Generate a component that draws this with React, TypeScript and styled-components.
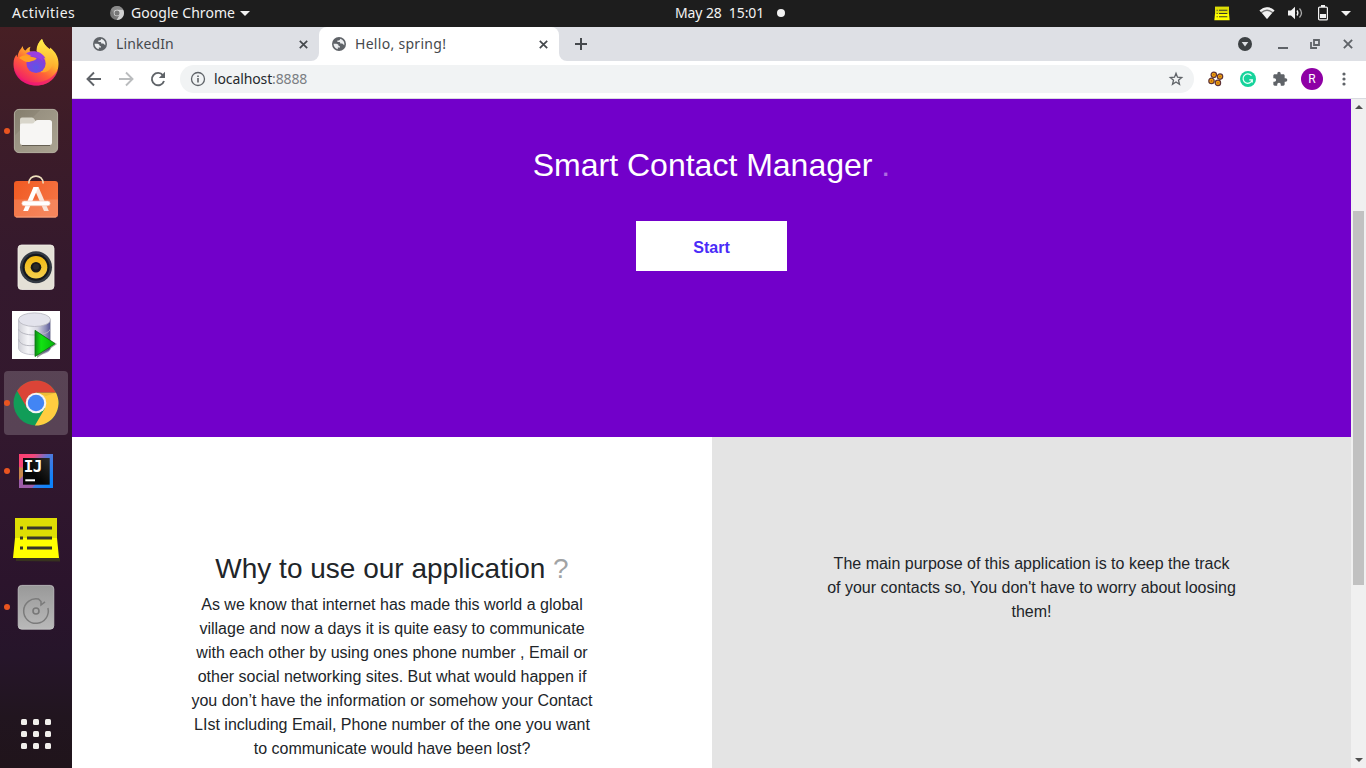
import React from "react";
import styled, { createGlobalStyle } from "styled-components";

const GlobalStyle = createGlobalStyle`
  * { box-sizing: border-box; }
  body { margin: 0; overflow: hidden; }
  svg { display: block; flex: none; }
`;

const Desktop = styled.div`
  width: 1366px;
  height: 768px;
  display: flex;
  flex-direction: column;
  overflow: hidden;
  background: #fff;
  font-family: "Noto Sans", "Open Sans", sans-serif;
`;

const TopBar = styled.header`
  height: 27px;
  flex: none;
  display: grid;
  grid-template-columns: 675px 1fr auto;
  align-items: center;
  background: #1d1d1d;
  color: #f2f2f2;
  padding-right: 15px;
`;

const BarGroup = styled.div<{ $pad?: number }>`
  display: flex;
  align-items: center;
  height: 27px;
  padding-left: ${(p) => p.$pad ?? 0}px;
  padding-bottom: 1px;
`;

const Label = styled.span<{ $w?: number; $track?: number }>`
  font-size: 14px;
  letter-spacing: ${(p) => p.$track ?? 0}px;
  width: ${(p) => (p.$w ? `${p.$w}px` : "auto")};
  line-height: 20px;
  white-space: pre;
  flex: none;
`;

const Gap = styled.span<{ $w: number }>`
  width: ${(p) => p.$w}px;
  flex: none;
`;

const Main = styled.div`
  flex: 1;
  display: flex;
  min-height: 0;
`;

const Dock = styled.nav`
  width: 72px;
  flex: none;
  display: flex;
  flex-direction: column;
  gap: 4px;
  padding: 4px 4px 2px;
  background: linear-gradient(#471f24 0%, #3d1c28 13%, #34192d 33%, #32182e 55%, #2b142c 75%, #26152a 85%, #21151f 93%, #20141b 100%);
`;

const DockItem = styled.div<{ $active?: boolean; $last?: boolean }>`
  width: 64px;
  height: 64px;
  flex: none;
  display: flex;
  align-items: center;
  justify-content: center;
  position: relative;
  border-radius: 4px;
  margin-top: ${(p) => (p.$last ? "auto" : 0)};
  background: ${(p) => (p.$active ? "rgba(255,255,255,.19)" : "transparent")};
`;

const RunningDot = styled.i`
  position: absolute;
  left: 0;
  top: 29px;
  width: 6px;
  height: 6px;
  border-radius: 50%;
  background: #e95420;
`;

const AppGrid = styled.div`
  display: grid;
  grid-template-columns: repeat(3, 6px);
  gap: 6px;
`;

const AppDot = styled.i`
  height: 6px;
  border-radius: 1.5px;
  background: #f1efec;
`;

const Browser = styled.section`
  flex: 1;
  min-width: 0;
  display: flex;
  flex-direction: column;
`;

const TabStrip = styled.div`
  height: 34px;
  flex: none;
  display: flex;
  background: #fff;
  color: #45494d;
`;

const Tab = styled.div<{ $active?: boolean }>`
  width: ${(p) => (p.$active ? 240 : 247)}px;
  padding: 0 11px 0 ${(p) => (p.$active ? 13 : 21)}px;
  display: flex;
  align-items: center;
  gap: 9px;
  background: ${(p) => (p.$active ? "#fff" : "#dee0e5")};
  border-radius: ${(p) => (p.$active ? "8px 8px 0 0" : "0 0 8px 0")};
`;

const TabCorner = styled.div`
  width: 240px;
  display: flex;
  background: linear-gradient(#dee0e5 0 12px, #fff 12px);
`;

const TabLabel = styled(Label)`
  flex: 1;
`;

const StripRest = styled.div`
  flex: 1;
  display: flex;
  align-items: center;
  background: #dee0e5;
  border-radius: 0 0 0 8px;
  padding: 0 13px 0 14px;
`;

const Spacer = styled.span`
  flex: 1;
`;

const Toolbar = styled.div`
  height: 38px;
  flex: none;
  display: flex;
  align-items: center;
  padding: 0 13px 2px;
  background: #fff;
  border-bottom: 1px solid #d9dae0;
`;

const Omnibox = styled.div`
  width: 1014px;
  height: 28px;
  flex: none;
  display: flex;
  align-items: center;
  padding: 0 10px;
  border-radius: 14px;
  background: #f1f3f4;
  color: #25282c;
`;

const Port = styled.span`
  color: #7b7e83;
`;

const Avatar = styled.div`
  width: 22px;
  height: 22px;
  flex: none;
  border-radius: 50%;
  display: flex;
  align-items: center;
  justify-content: center;
  background: #8e00a5;
  color: #fff;
  font: 12px/22px Roboto, sans-serif;
`;

const Viewport = styled.div`
  flex: 1;
  display: flex;
  min-height: 0;
`;

const Page = styled.main`
  flex: 1;
  display: flex;
  flex-direction: column;
  font-family: "Liberation Sans", Arial, sans-serif;
  color: #212529;
  overflow: hidden;
`;

const Hero = styled.section`
  height: 338px;
  flex: none;
  display: flex;
  flex-direction: column;
  align-items: center;
  padding-top: 46px;
  background: #7200ca;
`;

const HeroTitle = styled.h1`
  margin: 0 0 36px;
  font-size: 32px;
  font-weight: 400;
  line-height: 40px;
  color: #fff;
`;

const Faded = styled.span`
  opacity: .42;
`;

const StartButton = styled.button`
  width: 151px;
  height: 50px;
  border: 0;
  padding: 3px 0 0;
  background: #fff;
  color: #4a2cf8;
  font: bold 16px "Liberation Sans", Arial, sans-serif;
`;

const Columns = styled.div`
  flex: 1;
  display: grid;
  grid-template-columns: 640px 639px;
  min-height: 0;
`;

const Column = styled.section<{ $shade?: boolean }>`
  background: ${(p) => (p.$shade ? "#e4e4e4" : "#fff")};
  padding-top: 115px;
  text-align: center;
  overflow: hidden;
`;

const Question = styled.h2`
  margin: 0 0 7px;
  font-size: 28px;
  font-weight: 400;
  line-height: 34px;
`;

const Copy = styled.p`
  margin: 0;
  font-size: 16px;
  line-height: 24px;
`;

const ScrollTrack = styled.div`
  width: 15px;
  flex: none;
  display: flex;
  flex-direction: column;
  align-items: center;
  background: #f0f0f0;
  padding: 6px 0;
  justify-content: space-between;
`;

const ScrollThumb = styled.div`
  width: 11px;
  height: 374px;
  background: #c1c1c1;
  margin-bottom: 72px;
`;

const Firefox = () => (
  <svg width="48" height="48" viewBox="0 0 48 48">
    <defs>
      <linearGradient id="ffBody" x1=".8" y1=".1" x2=".25" y2=".95">
        <stop offset="0" stopColor="#ffe845" />
        <stop offset=".35" stopColor="#ffb02d" />
        <stop offset=".62" stopColor="#ff6038" />
        <stop offset="1" stopColor="#f01a6c" />
      </linearGradient>
      <radialGradient id="ffCore" cx=".5" cy=".7" r=".7">
        <stop offset="0" stopColor="#5b56e8" />
        <stop offset="1" stopColor="#9a35d6" />
      </radialGradient>
      <linearGradient id="ffTail" x1="0" y1="0" x2="0" y2="1">
        <stop offset="0" stopColor="#fff04a" />
        <stop offset="1" stopColor="#ffa22b" />
      </linearGradient>
    </defs>
    <path d="M7.3 12C8 11 9.500 9 10.700 7C11 9.500 12 11 13.500 11.500C15 9.500 16.500 8.500 18.500 7.800C17.500 10 17.600 11.500 18 12.500L25 13C25 8 26.200 3.500 30 0C31.500 4.500 34 7.500 37 9.500C38 10.500 38.300 9.700 38 8.500C44 13 46.700 19 46.500 25C46.200 38 36.500 46.500 24.500 46.500C11.500 46.500 1.500 37 1.500 25C1.500 20 3 17 4.700 15.500C4.700 17 5 17.800 5.500 18C6 15 6.500 13.500 7.300 12Z" fill="url(#ffBody)" />
    <path d="M1.600 28C5 38 13 43.500 23 43.500C34 43.500 42 38 46.200 30C44.500 39 36 46.500 24.500 46.500C12 46.500 2.800 39 1.600 28Z" fill="#ec137c" opacity=".6" />
    <path d="M24.500 12C24.500 7 26.500 3 30 0C31.500 5 34.500 8 38 11C42 15 43 21 40 27C37 33 33 34 28 33C36 28 35 19 30.500 16C29 15 26.500 14 24.500 12Z" fill="url(#ffTail)" />
    <circle cx="24" cy="24.500" r="9.600" fill="url(#ffCore)" />
    <path d="M14 14.500C17 12 22 11.800 24 12.500C28 13 32 16 33.500 19.500L30 18.500C31 20 31 21 30.500 22C27 17.500 21 18.500 14 14.500Z" fill="#9a3fe0" />
    <path d="M7 19C10 16 14 15.300 18 17.200C20.500 18.300 23 18.300 24.500 19C24 21.800 20.500 21.500 18.500 22.500C16.500 23.500 14 23 12 22Z" fill="#ffa024" />
  </svg>
);

const Files = () => (
  <svg width="48" height="48" viewBox="0 0 48 48">
    <defs>
      <linearGradient id="fileBg" x1="0" y1="0" x2="1" y2="1">
        <stop offset="0" stopColor="#857e6d" />
        <stop offset=".3" stopColor="#8f8878" />
        <stop offset=".31" stopColor="#989181" />
        <stop offset="1" stopColor="#aaa391" />
      </linearGradient>
    </defs>
    <rect x="2.400" y="2.400" width="43.200" height="43.200" rx="4.500" fill="url(#fileBg)" stroke="#b5b0a1" />
    <path d="M8 15V12.500Q8 10.500 10 10.500H20Q21.500 10.500 22.300 12L23.500 14H37V18H8Z" fill="#d9d6cb" />
    <path d="M8 18.500Q8 16.500 10 16.500H20Q21.500 16.500 22.500 15L23.500 14Q24 13 26 13H37.500Q40 13 40 15.500V35.500Q40 38 37.500 38H10.500Q8 38 8 35.500Z" fill="#f7f6f4" />
    <path d="M10 38.500H38" stroke="#5f594d" strokeWidth=".9" />
  </svg>
);

const Software = () => (
  <svg width="48" height="48" viewBox="0 0 48 48">
    <defs>
      <linearGradient id="bag" x1="0" y1="0" x2="1" y2=".5">
        <stop offset="0" stopColor="#f05a22" />
        <stop offset="1" stopColor="#f57242" />
      </linearGradient>
    </defs>
    <rect x="2" y="6" width="44" height="36.500" rx="3" fill="url(#bag)" />
    <path d="M2 24.500H46V39.500Q46 42.500 43 42.500H5Q2 42.500 2 39.500Z" fill="#fff" opacity=".14" />
    <path d="M4 42H44" stroke="#f8a98a" strokeWidth=".8" />
    <path d="M16.800 8.500C16.800-1.400 31.200-1.400 31.200 8.500" fill="none" stroke="#efe0bd" strokeWidth="1.600" />
    <path d="M26.500 12L36.800 36H32L21.500 12Z" fill="#f9e4da" />
    <path d="M21.500 12H26.500L16 36H11.200Z" fill="#fff" />
    <rect x="9.800" y="26" width="28.400" height="4.800" rx="2.400" fill="#fff" stroke="#f3bea5" strokeWidth=".6" />
  </svg>
);

const Speaker = () => (
  <svg width="48" height="48" viewBox="0 0 48 48">
    <defs>
      <linearGradient id="cone" x1="0" y1="0" x2="0" y2="1">
        <stop offset="0" stopColor="#f1b80f" />
        <stop offset="1" stopColor="#f4cf4e" />
      </linearGradient>
    </defs>
    <rect x="6" y="2" width="36" height="44.500" rx="3.500" fill="#e4e0d6" stroke="#f3f0ea" strokeWidth=".8" />
    <circle cx="24" cy="24.300" r="16" fill="#343a43" />
    <circle cx="24" cy="24.300" r="13.500" fill="#15181d" />
    <circle cx="24" cy="24.300" r="11.300" fill="url(#cone)" />
    <circle cx="24" cy="24.300" r="5.300" fill="#1a1a1a" />
    <circle cx="24" cy="23.700" r="3" fill="#2b2b29" />
  </svg>
);

const SqlDeveloper = () => (
  <svg width="48" height="48" viewBox="0 0 48 48">
    <defs>
      <linearGradient id="drum">
        <stop offset="0" stopColor="#cfcfd6" />
        <stop offset=".3" stopColor="#f5f5f8" />
        <stop offset=".6" stopColor="#d5d5e0" />
        <stop offset=".85" stopColor="#8d8db8" />
        <stop offset="1" stopColor="#555594" />
      </linearGradient>
      <linearGradient id="play">
        <stop offset="0" stopColor="#0a8a14" />
        <stop offset=".3" stopColor="#12e312" />
        <stop offset="1" stopColor="#06b50a" />
      </linearGradient>
    </defs>
    <path fill="#fff" d="M0 0H48V48H0Z" />
    <path d="M6.500 9V37C7 46 38 46 38.500 37V9Z" fill="url(#drum)" stroke="#bdbdc8" strokeWidth=".8" />
    <ellipse cx="22.500" cy="8.700" rx="16" ry="6.800" fill="#e3e3ec" stroke="#b4b4bd" strokeWidth=".8" />
    <path d="M6.500 18C8 26 36 26 38.500 18M6.500 28C8 36 20 35 24 34" fill="none" stroke="#b7b7c0" />
    <path d="M24.500 20.500L45 33L25 47Z" fill="#333" opacity=".45" />
    <path d="M23 19.300L43 32.700L23 45.500Z" fill="url(#play)" stroke="#08780e" strokeWidth=".8" />
  </svg>
);

const ChromeIcon = ({ size = 48, gray = false }: { size?: number; gray?: boolean }) => (
  <svg width={size} height={size} viewBox={gray ? "1.500 1.500 45 45" : "0 0 48 48"}>
    <circle cx="24" cy="24" r="22.500" fill={gray ? "#777" : "#119d58"} />
    <path d="M15.080 29.150L5.080 11.830A22.500 22.500 0 0 1 44 13.700H24Z" fill={gray ? "#8b8b8b" : "#db4437"} />
    <path d="M24 13.700H44A22.500 22.500 0 0 1 22.920 46.470L32.920 29.150Z" fill={gray ? "#d0d0d0" : "#ffcd40"} />
    <path d="M24 13.700H44L34 17Z" fill="#8a5a10" opacity={gray ? 0 : 0.14} />
    <circle cx="24" cy="24" r="10.300" fill={gray ? "#ddd" : "#f4f4f4"} />
    <circle cx="24" cy="24" r="8.200" fill={gray ? "#777" : "#4285f4"} />
  </svg>
);

const IntelliJ = () => (
  <svg width="48" height="48" viewBox="0 0 48 48">
    <defs>
      <linearGradient id="ijRim" x1="0" y1="0" x2="1" y2=".7">
        <stop offset="0" stopColor="#ff3d6f" />
        <stop offset=".32" stopColor="#f0487c" />
        <stop offset=".6" stopColor="#5778d8" />
        <stop offset="1" stopColor="#0d83fb" />
      </linearGradient>
      <linearGradient id="ijFace" x1="0" y1="1" x2="1" y2="0">
        <stop offset=".4" stopColor="#050505" />
        <stop offset="1" stopColor="#2c2c2c" />
      </linearGradient>
    </defs>
    <path fill="url(#ijRim)" d="M7 7H41V41H7Z" />
    <path fill="#c7874b" d="M7 20L12 21V31L7 34Z" />
    <path fill="#9d5ca8" d="M7 33L12 28V37H24L20 41H7Z" />
    <path fill="url(#ijFace)" d="M11 11H37.700V37.700H11Z" />
    <text x="11.800" y="25" fill="#fff" fontFamily="DejaVu Sans Mono, monospace" fontWeight="700" fontSize="16" letterSpacing="-.7">IJ</text>
    <path fill="#fff" d="M13.300 32.300H23V34.300H13.300Z" />
  </svg>
);

const Notes = ({ small = false }: { small?: boolean }) => (
  <svg width={small ? 16 : 48} height={small ? 15 : 48} viewBox={small ? "0 2 48 42" : "0 0 48 48"}>
    {!small && <path d="M4 43H48V46.500L4 46Z" fill="#37321f" />}
    <path d="M3 3H45V23L47 43H1L3 23Z" fill="#ff0" />
    <path d="M3 3H45V23H3Z" fill="#dede04" />
    <path d="M8 11.500H11V14.500H8ZM15 11.500H40V14.500H15ZM8 21.500H11V24.500H8ZM15 21.500H40V24.500H15ZM8 31.500H11V34.500H8ZM15 31.500H40V34.500H15Z" fill="#37372c" />
  </svg>
);

const Disk = () => (
  <svg width="48" height="48" viewBox="0 0 48 48">
    <defs>
      <linearGradient id="disk" x1="0" y1="0" x2="0" y2="1">
        <stop offset="0" stopColor="#999" />
        <stop offset="1" stopColor="#b9b9b9" />
      </linearGradient>
    </defs>
    <rect x="6.200" y="2.400" width="35.600" height="43.800" rx="3.500" fill="url(#disk)" stroke="#c8c8c8" strokeWidth=".8" />
    <path d="M35.900 25A12.300 12.300 0 1 1 26.500 16L29 18.500V22L33 18.800" fill="none" stroke="#7b7b7b" strokeWidth="1.500" />
    <circle cx="24" cy="28" r="3" fill="none" stroke="#777" strokeWidth="1.600" />
  </svg>
);

const Globe = () => (
  <svg width="14" height="14" viewBox="0 0 14 14">
    <circle cx="7" cy="7" r="7" fill="#5f6368" />
    <path d="M1.500 6.800H4.500Q6.800 7 6.800 9.200H8V10.500H5.800V12.300Q1.800 11.200 1.500 6.800ZM8.200 1.700Q8 3.300 6.800 3.400H5.400V5H7.600Q8.300 5 8.300 6.600H10.200Q11 7.200 12.300 8.200Q13 3.200 8.200 1.700Z" fill="#eceef0" />
  </svg>
);

const Cross = ({ size = 9, color = "#45494d" }: { size?: number; color?: string }) => (
  <svg width={size} height={size} viewBox="0 0 9 9">
    <path d="M.800 .800L8.200 8.200M8.200 .800L.800 8.200" stroke={color} strokeWidth="1.700" />
  </svg>
);

const Triangle = ({ w = 10, h = 5, color = "#f2f2f2", up = false }: { w?: number; h?: number; color?: string; up?: boolean }) => (
  <svg width={w} height={h} viewBox="0 0 10 5">
    <path d={up ? "M0 5H10L5 0Z" : "M0 0H10L5 5Z"} fill={color} />
  </svg>
);

const NavArrow = ({ forward = false }: { forward?: boolean }) => (
  <svg width="16" height="16" viewBox="0 0 16 16">
    <path
      d={forward ? "M1 8H14M8 1.500L14.500 8L8 14.500" : "M15 8H2M8 1.500L1.500 8L8 14.500"}
      fill="none"
      stroke={forward ? "#babcbe" : "#5f6368"}
      strokeWidth="1.900"
    />
  </svg>
);

const Reload = () => (
  <svg width="16" height="16" viewBox="0 0 16 16">
    <path d="M13 4.300A6.200 6.200 0 1 0 14 10" fill="none" stroke="#5f6368" strokeWidth="1.900" />
    <path d="M15 .800V7H8.800Z" fill="#5f6368" />
  </svg>
);

const Info = () => (
  <svg width="16" height="16" viewBox="0 0 16 16">
    <circle cx="8" cy="8" r="6.500" fill="none" stroke="#5f6368" strokeWidth="1.300" />
    <path d="M7.200 7H8.800V11.500H7.200ZM7.200 4.400H8.800V5.900H7.200Z" fill="#5f6368" />
  </svg>
);

const Star = () => (
  <svg width="16" height="16" viewBox="0 0 16 16">
    <path d="M8 2.300L9.500 6.200L13.700 6.500L10.500 9.200L11.500 13.300L8 11L4.500 13.300L5.500 9.200L2.300 6.500L6.500 6.200Z" fill="none" stroke="#5f6368" strokeWidth="1.300" />
  </svg>
);

const Blossoms = () => (
  <svg width="16" height="16" viewBox="0 0 16 16">
    {[[5.800, 3.800], [12, 5.600], [3.500, 9.900], [9.900, 11.900]].map(([x, y]) => (
      <g key={x}>
        <circle cx={x} cy={y} r="2.700" fill="#f2a20d" stroke="#5f3438" strokeWidth="1.200" />
        <circle cx={x} cy={y} r=".8" fill="#b5600f" />
      </g>
    ))}
  </svg>
);

const Grammar = () => (
  <svg width="16" height="16" viewBox="0 0 16 16">
    <circle cx="8" cy="8" r="8" fill="#15d39b" />
    <path d="M11.500 4.700A4.700 4.700 0 1 0 12.300 8.800H9.300M12.300 8.300V11.500" fill="none" stroke="#effffa" strokeWidth="1.200" />
  </svg>
);

const Puzzle = () => (
  <svg width="16" height="16" viewBox="0 0 24 24">
    <path d="M20.500 11H19V7c0-1.100-.9-2-2-2h-4V3.500a2.500 2.500 0 0 0-5 0V5H4c-1.100 0-2 .9-2 2v3.800h1.500a2.700 2.700 0 0 1 0 5.400H2V20c0 1.100.9 2 2 2h3.800v-1.500a2.700 2.700 0 0 1 5.400 0V22H17c1.100 0 2-.9 2-2v-4h1.500a2.500 2.500 0 0 0 0-5z" fill="#5f6368" />
  </svg>
);

const Wifi = () => (
  <svg width="16" height="12" viewBox="0 0 16 12">
    <path d="M.500 3.500Q8-2.800 15.500 3.500L8 12Z" fill="#777" />
    <path d="M.500 3.500Q8-2.800 15.500 3.500L14 5Q8 0 2 5Z" fill="#f2f2f2" />
    <path d="M3 6Q8 2 13 6L8 12Z" fill="#f2f2f2" />
  </svg>
);

const Volume = () => (
  <svg width="15" height="14" viewBox="0 0 15 14">
    <path d="M0 4.500H3L7 .800V13.200L3 9.500H0Z" fill="#f2f2f2" />
    <path d="M9 4.500Q10.800 7 9 9.500" fill="none" stroke="#f2f2f2" strokeWidth="1.300" />
    <path d="M11.500 2.500Q15.500 7 11.500 11.500" fill="none" stroke="#aaa" strokeWidth="1.300" />
  </svg>
);

const Battery = () => (
  <svg width="10" height="16" viewBox="0 0 10 16">
    <path d="M3 0H7V2H3ZM2 9H8V13H2Z" fill="#f2f2f2" />
    <rect x=".600" y="2.100" width="8.800" height="12.800" rx="1" fill="none" stroke="#f2f2f2" strokeWidth="1.200" />
  </svg>
);

const apps = [
  { icon: <Firefox /> },
  { icon: <Files />, running: true },
  { icon: <Software /> },
  { icon: <Speaker /> },
  { icon: <SqlDeveloper /> },
  { icon: <ChromeIcon />, running: true, active: true },
  { icon: <IntelliJ />, running: true },
  { icon: <Notes /> },
  { icon: <Disk />, running: true },
];

export default function App() {
  return (
    <Desktop>
      <GlobalStyle />
      <TopBar>
        <BarGroup $pad={12}>
          <Label $w={98} $track={0.5}>Activities</Label>
          <ChromeIcon size={14} gray />
          <Gap $w={7} />
          <Label $w={105} $track={0.05}>Google Chrome</Label>
          <Gap $w={4} />
          <Triangle />
        </BarGroup>
        <BarGroup>
          <Label $w={102} $track={-0.1}>May 28  15:01</Label>
          <svg width="8" height="8"><circle cx="4" cy="4" r="4" fill="#f2f2f2" /></svg>
        </BarGroup>
        <BarGroup>
          <Notes small />
          <Gap $w={29} />
          <Wifi />
          <Gap $w={13} />
          <Volume />
          <Gap $w={15} />
          <Battery />
          <Gap $w={13} />
          <Triangle />
        </BarGroup>
      </TopBar>
      <Main>
        <Dock>
          {apps.map((app, i) => (
            <DockItem key={i} $active={app.active}>
              {app.running && <RunningDot />}
              {app.icon}
            </DockItem>
          ))}
          <DockItem $last>
            <AppGrid>
              {Array.from({ length: 9 }, (_, i) => <AppDot key={i} />)}
            </AppGrid>
          </DockItem>
        </Dock>
        <Browser>
          <TabStrip>
            <Tab><Globe /><TabLabel $track={0.1}>LinkedIn</TabLabel><Cross /></Tab>
            <TabCorner>
              <Tab $active><Globe /><TabLabel $track={0.3}>Hello, spring!</TabLabel><Cross /></Tab>
            </TabCorner>
            <StripRest>
              <Gap $w={2} />
              <svg width="12" height="12" viewBox="0 0 12 12"><path d="M6 0V12M0 6H12" stroke="#45494d" strokeWidth="2" /></svg>
              <Spacer />
              <svg width="14" height="14" viewBox="0 0 14 14">
                <circle cx="7" cy="7" r="7" fill="#3c4043" />
                <path d="M3.700 5H10.300L7 9.500Z" fill="#dee0e5" />
              </svg>
              <Gap $w={26} />
              <svg width="10" height="10"><path d="M0 9H10" stroke="#5f6368" strokeWidth="2" /></svg>
              <Gap $w={22} />
              <svg width="10" height="10" viewBox="0 0 10 10"><path d="M4 1H9V6H4ZM1 3V9H7" fill="none" stroke="#5f6368" strokeWidth="1.800" /></svg>
              <Gap $w={23} />
              <Cross size={10} color="#5f6368" />
            </StripRest>
          </TabStrip>
          <Toolbar>
            <Gap $w={1} />
            <NavArrow />
            <Gap $w={16} />
            <NavArrow forward />
            <Gap $w={16} />
            <Reload />
            <Gap $w={14} />
            <Omnibox>
              <Info />
              <Gap $w={8} />
              <Label $track={-0.12}>localhost<Port>:8888</Port></Label>
              <Spacer />
              <Star />
            </Omnibox>
            <Gap $w={14} />
            <Blossoms />
            <Gap $w={16} />
            <Grammar />
            <Gap $w={16} />
            <Puzzle />
            <Gap $w={13} />
            <Avatar>R</Avatar>
            <Gap $w={19} />
            <svg width="4" height="14" fill="#5f6368"><circle cx="2" cy="2" r="1.600" /><circle cx="2" cy="7" r="1.600" /><circle cx="2" cy="12" r="1.600" /></svg>
          </Toolbar>
          <Viewport>
            <Page>
              <Hero>
                <HeroTitle>Smart Contact Manager <Faded>.</Faded></HeroTitle>
                <StartButton>Start</StartButton>
              </Hero>
              <Columns>
                <Column>
                  <Question>Why to use our application <Faded>?</Faded></Question>
                  <Copy>
                    As we know that internet has made this world a global<br />
                    village and now a days it is quite easy to communicate<br />
                    with each other by using ones phone number , Email or<br />
                    other social networking sites. But what would happen if<br />
                    you don’t have the information or somehow your Contact<br />
                    LIst including Email, Phone number of the one you want<br />
                    to communicate would have been lost?
                  </Copy>
                </Column>
                <Column $shade>
                  <Copy>
                    The main purpose of this application is to keep the track<br />
                    of your contacts so, You don't have to worry about loosing<br />
                    them!
                  </Copy>
                </Column>
              </Columns>
            </Page>
            <ScrollTrack>
              <Triangle w={8} h={4} color="#4f4f4f" up />
              <ScrollThumb />
              <Triangle w={8} h={4} color="#4f4f4f" />
            </ScrollTrack>
          </Viewport>
        </Browser>
      </Main>
    </Desktop>
  );
}
